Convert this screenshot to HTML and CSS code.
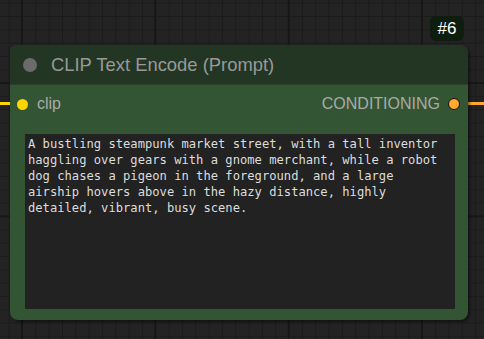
FILE: index.html
```html
<!DOCTYPE html>
<html>
<head>
<meta charset="utf-8">
<link rel="stylesheet" href="styles.css">
</head>
<body>
<div class="canvas">
  <div class="wire wire-in"></div>
  <div class="wire wire-out"></div>
  <div class="badge">#6</div>
  <div class="node">
    <div class="title">
      <span class="title-dot"></span>
      <span class="title-text">CLIP Text Encode (Prompt)</span>
    </div>
    <div class="body">
      <div class="slots">
        <div class="slot slot-in"><span class="dot dot-in"></span><span>clip</span></div>
        <div class="slot slot-out"><span>CONDITIONING</span><span class="dot dot-out"></span></div>
      </div>
      <div class="prompt">A bustling steampunk market street, with a tall inventor haggling over gears with a gnome merchant, while a robot dog chases a pigeon in the foreground, and a large airship hovers above in the hazy distance, highly detailed, vibrant, busy scene.</div>
    </div>
  </div>
</div>
</body>
</html>
```
FILE: styles.css
```css
html, body {
  margin: 0;
  padding: 0;
}
body {
  width: 484px;
  height: 339px;
  overflow: hidden;
  background-color: #222222;
}
.canvas {
  position: relative;
  width: 484px;
  height: 339px;
  background-color: #232323;
  background-image:
    linear-gradient(to right, #171717 2px, transparent 2px),
    linear-gradient(to bottom, #171717 2px, transparent 2px),
    linear-gradient(to right, #1b1b1b 1px, transparent 1px),
    linear-gradient(to bottom, #1b1b1b 1px, transparent 1px);
  background-size:
    133.333px 133.333px,
    133.333px 133.333px,
    13.333px 13.333px,
    13.333px 13.333px;
  background-position:
    21px 0,
    0 82px,
    8.67px 0,
    0 2.67px;
  font-family: "Liberation Sans", Arial, sans-serif;
}
.wire {
  position: absolute;
  height: 3px;
}
.wire-in {
  left: 0;
  top: 102px;
  width: 20px;
  background: #ffd500;
}
.wire-out {
  left: 455px;
  top: 102px;
  width: 29px;
  background: #ffa931;
}
.badge {
  position: absolute;
  left: 430px;
  top: 16px;
  width: 34px;
  height: 25px;
  border-radius: 6px;
  background: #0f1d0f;
  color: #ffffff;
  font-size: 17px;
  line-height: 25px;
  text-align: center;
}
.node {
  position: absolute;
  left: 10px;
  top: 45px;
  width: 458px;
  height: 275px;
  border-radius: 8px;
  background: #335533;
  box-shadow: 2px 2px 3px rgba(0, 0, 0, 0.45);
  display: flex;
  flex-direction: column;
}
.title {
  height: 40px;
  background: #233523;
  border-radius: 8px 8px 0 0;
  display: flex;
  align-items: center;
  padding-left: 13px;
  gap: 14px;
  border-bottom: 1px solid #2a402a;
  box-sizing: border-box;
}
.title-dot {
  width: 14px;
  height: 14px;
  border-radius: 50%;
  background: #6b6b6b;
}
.title-text {
  color: #999999;
  font-size: 18.4px;
}
.body {
  flex: 1;
  display: flex;
  flex-direction: column;
  padding: 9px 13px 11px 15px;
}
.slots {
  height: 20px;
  display: flex;
  justify-content: space-between;
  align-items: center;
  color: #aaaaaa;
  font-size: 16px;
}
.slot {
  display: flex;
  align-items: center;
}
.slot-in {
  margin-left: -8px;
  gap: 9px;
}
.slot-out {
  margin-right: -5px;
  gap: 8px;
}
.dot {
  display: block;
  border-radius: 50%;
}
.dot-in {
  width: 11px;
  height: 11px;
  background: #ffd500;
}
.dot-out {
  width: 10px;
  height: 10px;
  background: #ffa931;
  border: 1px solid #111111;
}
.prompt {
  margin-top: 20px;
  flex: 1;
  background: #222222;
  color: #dddddd;
  font-family: "DejaVu Sans Mono", monospace;
  font-size: 12.15px;
  line-height: 16px;
  padding: 2px 12px 2px 3px;
  white-space: pre-wrap;
  overflow: hidden;
}
```
